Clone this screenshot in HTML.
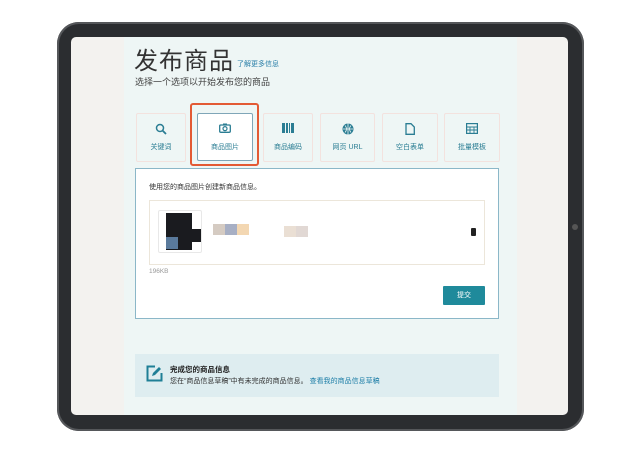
<!DOCTYPE html>
<html><head><meta charset="utf-8"><style>
*{margin:0;padding:0;box-sizing:border-box}
body{width:640px;height:475px;background:#fff;position:relative;overflow:hidden;font-family:"Liberation Sans","Noto Sans CJK SC",sans-serif}
.a{position:absolute}
.frame{left:57px;top:22px;width:527px;height:409px;background:#2b2d30;border-radius:22px;box-shadow:inset 0 0 0 2px #55575a}
.screen{left:71px;top:37px;width:497px;height:378px;background:#f3f2ef;border-radius:5px;overflow:hidden}
.col{left:124px;top:37px;width:393px;height:378px;background:#eef6f5}
.tile{top:113px;width:50px;height:49px;border:1px solid #f3e2de;border-radius:2px}
.lbl{font-size:7px;color:#2a7d93;text-align:center;width:100%;position:absolute;top:28px}
.ic{position:absolute;left:50%;top:9px;transform:translateX(-50%)}
</style></head><body>
<div class="a frame"></div>
<div class="a screen"></div>
<div class="a col"></div>
<div class="a" style="left:134px;top:41px;font-size:24px;color:#333;letter-spacing:1px">发布商品</div>
<div class="a" style="left:237px;top:59px;font-size:7px;color:#2a7fa8">了解更多信息</div>
<div class="a" style="left:135px;top:75px;font-size:9px;color:#444">选择一个选项以开始发布您的商品</div>

<div class="a tile" style="left:136px"><svg class="ic" width="12" height="12" viewBox="0 0 12 12"><circle cx="5" cy="5" r="3.5" fill="none" stroke="#2a7d93" stroke-width="1.5"/><path d="M7.5 7.5L11 11" stroke="#2a7d93" stroke-width="1.8"/></svg><div class="lbl">关键词</div></div>
<div class="a" style="left:190px;top:103px;width:69px;height:63px;border:2px solid #e35a35;border-radius:3px"></div>
<div class="a tile" style="left:197px;width:56px;height:48px;background:#fff;border:1.5px solid #7fa6b8"><svg class="ic" width="12" height="10" viewBox="0 0 12 10"><rect x="0.7" y="2" width="10.6" height="7.3" rx="1" fill="none" stroke="#2a7d93" stroke-width="1.3"/><rect x="4" y="0.5" width="4" height="2" fill="#2a7d93"/><circle cx="6" cy="5.6" r="2" fill="none" stroke="#2a7d93" stroke-width="1.2"/></svg><div class="lbl">商品图片</div></div>
<div class="a tile" style="left:263px"><svg class="ic" width="12" height="10" viewBox="0 0 12 10"><rect x="0" y="0" width="3" height="10" fill="#2a7d93"/><rect x="4" y="0" width="2" height="10" fill="#2a7d93"/><rect x="7" y="0" width="1" height="10" fill="#2a7d93"/><rect x="9" y="0" width="3" height="10" fill="#2a7d93"/></svg><div class="lbl">商品编码</div></div>
<div class="a tile" style="left:320px;width:55px"><svg class="ic" width="12" height="12" viewBox="0 0 12 12"><circle cx="6" cy="6" r="5.5" fill="#2a7d93"/><path d="M1 6h10M6 .5v11M3 2.5q3 3.5 0 7M9 2.5q-3 3.5 0 7" stroke="#eef6f5" stroke-width=".8" fill="none"/></svg><div class="lbl">网页 URL</div></div>
<div class="a tile" style="left:382px;width:56px"><svg class="ic" width="10" height="12" viewBox="0 0 10 12"><path d="M1 .7h5l3.3 3.3v7.3H1z" fill="none" stroke="#2a7d93" stroke-width="1.3"/></svg><div class="lbl">空白表单</div></div>
<div class="a tile" style="left:444px;width:56px"><svg class="ic" width="12" height="11" viewBox="0 0 12 11"><rect x=".6" y=".6" width="10.8" height="9.8" fill="none" stroke="#2a7d93" stroke-width="1.2"/><path d="M.6 4h10.8M.6 7h10.8M4 4v6.4M8 4v6.4" stroke="#2a7d93" stroke-width=".9"/></svg><div class="lbl">批量模板</div></div>

<div class="a" style="left:135px;top:168px;width:364px;height:151px;background:#fff;border:1.5px solid #8bb7c8"></div>
<div class="a" style="left:149px;top:182px;font-size:7px;color:#333">使用您的商品图片创建新商品信息。</div>
<div class="a" style="left:149px;top:200px;width:336px;height:65px;border:1px solid #ece6da;background:#fff"></div>
<div class="a" style="left:158px;top:210px;width:44px;height:43px;border:1px solid #e8e8e8;border-radius:2px;background:#fff">
 <div class="a" style="left:7px;top:2px;width:26px;height:37px;background:#1a1b1f"></div>
 <div class="a" style="left:26px;top:18px;width:16px;height:13px;background:#1a1b1f"></div>
 <div class="a" style="left:7px;top:26px;width:12px;height:12px;background:#5a7a9c"></div>
</div>
<div class="a" style="left:213px;top:224px;width:12px;height:11px;background:#d5cbc2"></div>
<div class="a" style="left:225px;top:224px;width:12px;height:11px;background:#a7afc4"></div>
<div class="a" style="left:237px;top:224px;width:12px;height:11px;background:#f3d7b2"></div>
<div class="a" style="left:284px;top:226px;width:12px;height:11px;background:#eadfd4"></div>
<div class="a" style="left:296px;top:226px;width:12px;height:11px;background:#e1d8d4"></div>
<div class="a" style="left:471px;top:228px;width:5px;height:8px;background:#222;border-radius:1px"></div>
<div class="a" style="left:149px;top:268px;font-size:6.5px;color:#999">196KB</div>
<div class="a" style="left:443px;top:286px;width:42px;height:19px;background:#1f8a9b;border-radius:1px;color:#fff;font-size:7px;text-align:center;line-height:19px">提交</div>

<div class="a" style="left:135px;top:354px;width:364px;height:43px;background:#deedf0"></div>
<svg class="a" style="left:146px;top:365px" width="17" height="17" viewBox="0 0 17 17"><path d="M9 1.5H1.5v14h14V8" fill="none" stroke="#1f7f96" stroke-width="2"/><path d="M6 11l1-3 6-6 2 2-6 6z" fill="#1f7f96"/></svg>
<div class="a" style="left:170px;top:364px;font-size:7.5px;color:#222;font-weight:bold">完成您的商品信息</div>
<div class="a" style="left:170px;top:376px;font-size:7px;color:#333">您在“商品信息草稿”中有未完成的商品信息。 <span style="color:#1f7fa8">查看我的商品信息草稿</span></div>
<div class="a" style="left:572px;top:224px;width:6px;height:6px;border-radius:50%;background:#555"></div>
</body></html>
